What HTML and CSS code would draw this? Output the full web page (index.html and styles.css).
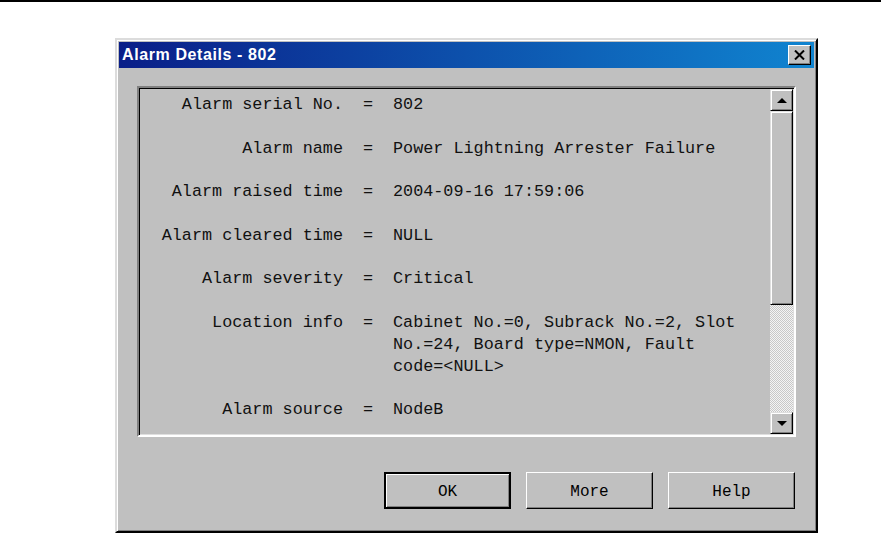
FILE: index.html
```html
<!DOCTYPE html>
<html lang="en">
<head>
  <meta charset="UTF-8">
  <title>Alarm Details - 802</title>
  <link rel="stylesheet" href="styles.css">
</head>
<body>
  <div class="top-rule"></div>

  <div class="dialog">
    <div class="title-bar">
      <span class="title-text">Alarm Details - 802</span>
      <button class="close-btn" aria-label="Close">
        <svg width="11" height="10" viewBox="0 0 11 10">
          <path d="M1 0.5 L10 9.5 M10 0.5 L1 9.5" stroke="#000" stroke-width="2" fill="none"/>
        </svg>
      </button>
    </div>

    <div class="dialog-body">
      <div class="details-box">
        <div class="details">
          <div class="label">Alarm serial No.</div>
          <div class="eq">=</div>
          <div class="value">802</div>

          <div class="label">Alarm name</div>
          <div class="eq">=</div>
          <div class="value">Power Lightning Arrester Failure</div>

          <div class="label">Alarm raised time</div>
          <div class="eq">=</div>
          <div class="value">2004-09-16 17:59:06</div>

          <div class="label">Alarm cleared time</div>
          <div class="eq">=</div>
          <div class="value">NULL</div>

          <div class="label">Alarm severity</div>
          <div class="eq">=</div>
          <div class="value">Critical</div>

          <div class="label">Location info</div>
          <div class="eq">=</div>
          <div class="value">Cabinet No.=0, Subrack No.=2, Slot No.=24, Board type=NMON, Fault code=&lt;NULL&gt;</div>

          <div class="label">Alarm source</div>
          <div class="eq">=</div>
          <div class="value">NodeB</div>
        </div>

        <div class="scrollbar">
          <div class="scroll-btn"><span class="arrow-up"></span></div>
          <div class="scroll-thumb"></div>
          <div class="scroll-track"></div>
          <div class="scroll-btn"><span class="arrow-down"></span></div>
        </div>
      </div>

      <div class="button-row">
        <button class="dlg-btn default">OK</button>
        <button class="dlg-btn">More</button>
        <button class="dlg-btn">Help</button>
      </div>
    </div>
  </div>
</body>
</html>
```

FILE: styles.css
```css
body {
  margin: 0;
  background-color: #fff;
  font-family: "Liberation Mono", "Courier New", monospace;
}

.top-rule {
  height: 2px;
  background-color: #000;
}

/* window frame */
.dialog {
  box-sizing: border-box;
  width: 703px;
  height: 495px;
  margin: 36px 0 0 115px;
  background-color: #c0c0c0;
  border: 2px solid;
  border-color: #dcdcdc #000 #000 #dcdcdc;
  box-shadow: inset 1px 1px #fff, inset -1px -1px #808080;
  padding: 2px;
}

.title-bar {
  height: 26px;
  display: flex;
  align-items: center;
  justify-content: space-between;
  padding: 0 3px 0 3px;
  background: linear-gradient(to right, #0a1e88, #1084d0);
}

.title-text {
  color: #fff;
  font-family: "Liberation Sans", Arial, sans-serif;
  font-weight: bold;
  font-size: 16px;
  letter-spacing: 0.6px;
}

.close-btn {
  box-sizing: border-box;
  width: 23px;
  height: 20px;
  padding: 0;
  display: flex;
  align-items: center;
  justify-content: center;
  background-color: #c0c0c0;
  border: 1px solid;
  border-color: #fff #000 #000 #fff;
  box-shadow: inset -1px -1px #808080;
}

.dialog-body {
  padding: 18px 18px 0 18px;
}

/* sunken list area */
.details-box {
  box-sizing: border-box;
  height: 351px;
  display: flex;
  border: 2px solid;
  border-color: #808080 #fff #fff #808080;
  box-shadow: inset 1px 1px #000, inset -1px -1px #dfdfdf;
  padding: 1px;
}

.details {
  flex: 1;
  overflow: hidden;
  display: grid;
  grid-template-columns: 190px 50px 355px;
  grid-auto-rows: min-content;
  row-gap: 21.8px;
  align-content: start;
  padding: 5px 0 0 13px;
  font-size: 16.8px;
  line-height: 21.8px;
  color: #111;
}

.label {
  text-align: right;
  white-space: nowrap;
}

.eq {
  text-align: center;
}

.scrollbar {
  width: 23px;
  display: flex;
  flex-direction: column;
}

.scroll-btn,
.scroll-thumb {
  box-sizing: border-box;
  background-color: #c0c0c0;
  border: 1px solid;
  border-color: #dfdfdf #000 #000 #dfdfdf;
  box-shadow: inset 1px 1px #fff, inset -1px -1px #808080;
}

.scroll-btn {
  height: 22px;
  display: flex;
  align-items: center;
  justify-content: center;
}

.scroll-thumb {
  height: 194px;
}

.scroll-track {
  flex: 1;
  background: repeating-conic-gradient(#c8c8c8 0 25%, #f4f4f4 0 50%) 0 0 / 2px 2px;
}

.arrow-up {
  width: 0;
  height: 0;
  border-left: 5px solid transparent;
  border-right: 5px solid transparent;
  border-bottom: 5px solid #000;
}

.arrow-down {
  width: 0;
  height: 0;
  border-left: 5px solid transparent;
  border-right: 5px solid transparent;
  border-top: 5px solid #000;
}

.button-row {
  display: flex;
  justify-content: flex-end;
  gap: 15px;
  margin-top: 35px;
  padding-right: 1px;
}

.dlg-btn {
  box-sizing: border-box;
  width: 127px;
  height: 37px;
  background-color: #c0c0c0;
  border: 1px solid;
  border-color: #fff #000 #000 #fff;
  box-shadow: inset -1px -1px #808080;
  font-family: "Liberation Mono", "Courier New", monospace;
  font-size: 16px;
  color: #000;
  padding: 2px 0 0 0;
}

.dlg-btn.default {
  border: 2px solid;
  border-color: #000;
  box-shadow: inset 1px 1px #fff, inset -1px -1px #808080;
}
```
